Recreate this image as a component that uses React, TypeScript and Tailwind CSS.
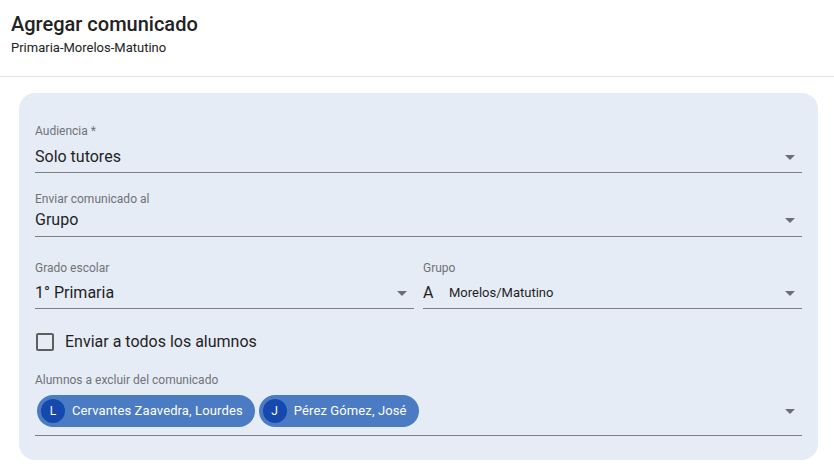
function Caret() {
  return (
    <svg width="10" height="5" viewBox="0 0 10 5" className="shrink-0">
      <path d="M0 0h10L5 5z" fill="#6b6e74" />
    </svg>
  );
}

// underline select, MUI "standard" look; gap/pad tweak the spacing per row
function SelectField({
  label,
  value,
  className = "",
  gap = "mt-[6px]",
  pad = "pb-[3px]",
}: {
  label: string;
  value: React.ReactNode;
  className?: string;
  gap?: string;
  pad?: string;
}) {
  return (
    <div className={`flex flex-col ${className}`}>
      <div className="h-4 text-[12px] leading-4 text-[#707278]">{label}</div>
      <div
        className={`${gap} ${pad} box-content flex h-6 items-center justify-between border-b border-[#7b7e85] pr-[7px]`}
      >
        <div className="text-[16px] leading-6 text-[#1f1f1f]">{value}</div>
        <Caret />
      </div>
    </div>
  );
}

function Chip({ letter, name }: { letter: string; name: string }) {
  return (
    <div className="flex h-8 items-center gap-[7px] rounded-full bg-[#4a7bc3] pl-1 pr-[12px] text-[13px] tracking-[0.12px] text-white">
      <span className="flex h-6 w-6 items-center justify-center rounded-full bg-[#1549ae] text-[12px]">
        {letter}
      </span>
      <span>{name}</span>
    </div>
  );
}

export default function App() {
  return (
    <div className="h-[473px] w-[834px] bg-white font-['Roboto',sans-serif]">
      <div className="border-b border-[#e2e2e2] px-[11px] pt-[10px] pb-[20px]">
        <h1 className="text-[20px] font-medium leading-7 text-[#222]">Agregar comunicado</h1>
        <p className="mt-[2px] text-[13px] leading-4 text-[#222]">Primaria-Morelos-Matutino</p>
      </div>

      <div className="mt-[16px] ml-[19px] mr-[16px] rounded-[16px] bg-[#e6ecf5] px-4 pt-[30px] pb-[24px]">
        <SelectField label="Audiencia *" value="Solo tutores" />
        <SelectField
          label="Enviar comunicado al"
          value="Grupo"
          className="mt-[18px]"
          gap="mt-[1px]"
          pad="pb-[4px]"
        />

        <div className="mt-[23px] grid grid-cols-2 gap-[9px]">
          <SelectField label="Grado escolar" value="1° Primaria" gap="mt-[5px]" />
          <SelectField
            label="Grupo"
            gap="mt-[5px]"
            value={
              <span className="flex items-center">
                <span className="w-[26px] text-[16px]">A</span>
                <span className="text-[13px]">Morelos/Matutino</span>
              </span>
            }
          />
        </div>

        <label className="mt-[21px] flex h-6 items-center gap-[11px] pl-[1px]">
          <span className="flex h-[18px] w-[18px] rounded-[2px] border-2 border-[#5d5f63]" />
          <span className="text-[16px] text-[#1f1f1f]">Enviar a todos los alumnos</span>
        </label>

        <div className="mt-[18px]">
          <div className="h-4 text-[12px] leading-4 text-[#707278]">Alumnos a excluir del comunicado</div>
          <div className="mt-[7px] flex items-center justify-between border-b border-[#7b7e85] pb-[8px] pl-[2px] pr-[7px]">
            <div className="flex gap-1">
              <Chip letter="L" name="Cervantes Zaavedra, Lourdes" />
              <Chip letter="J" name="Pérez Gómez, José" />
            </div>
            <Caret />
          </div>
        </div>
      </div>
    </div>
  );
}
